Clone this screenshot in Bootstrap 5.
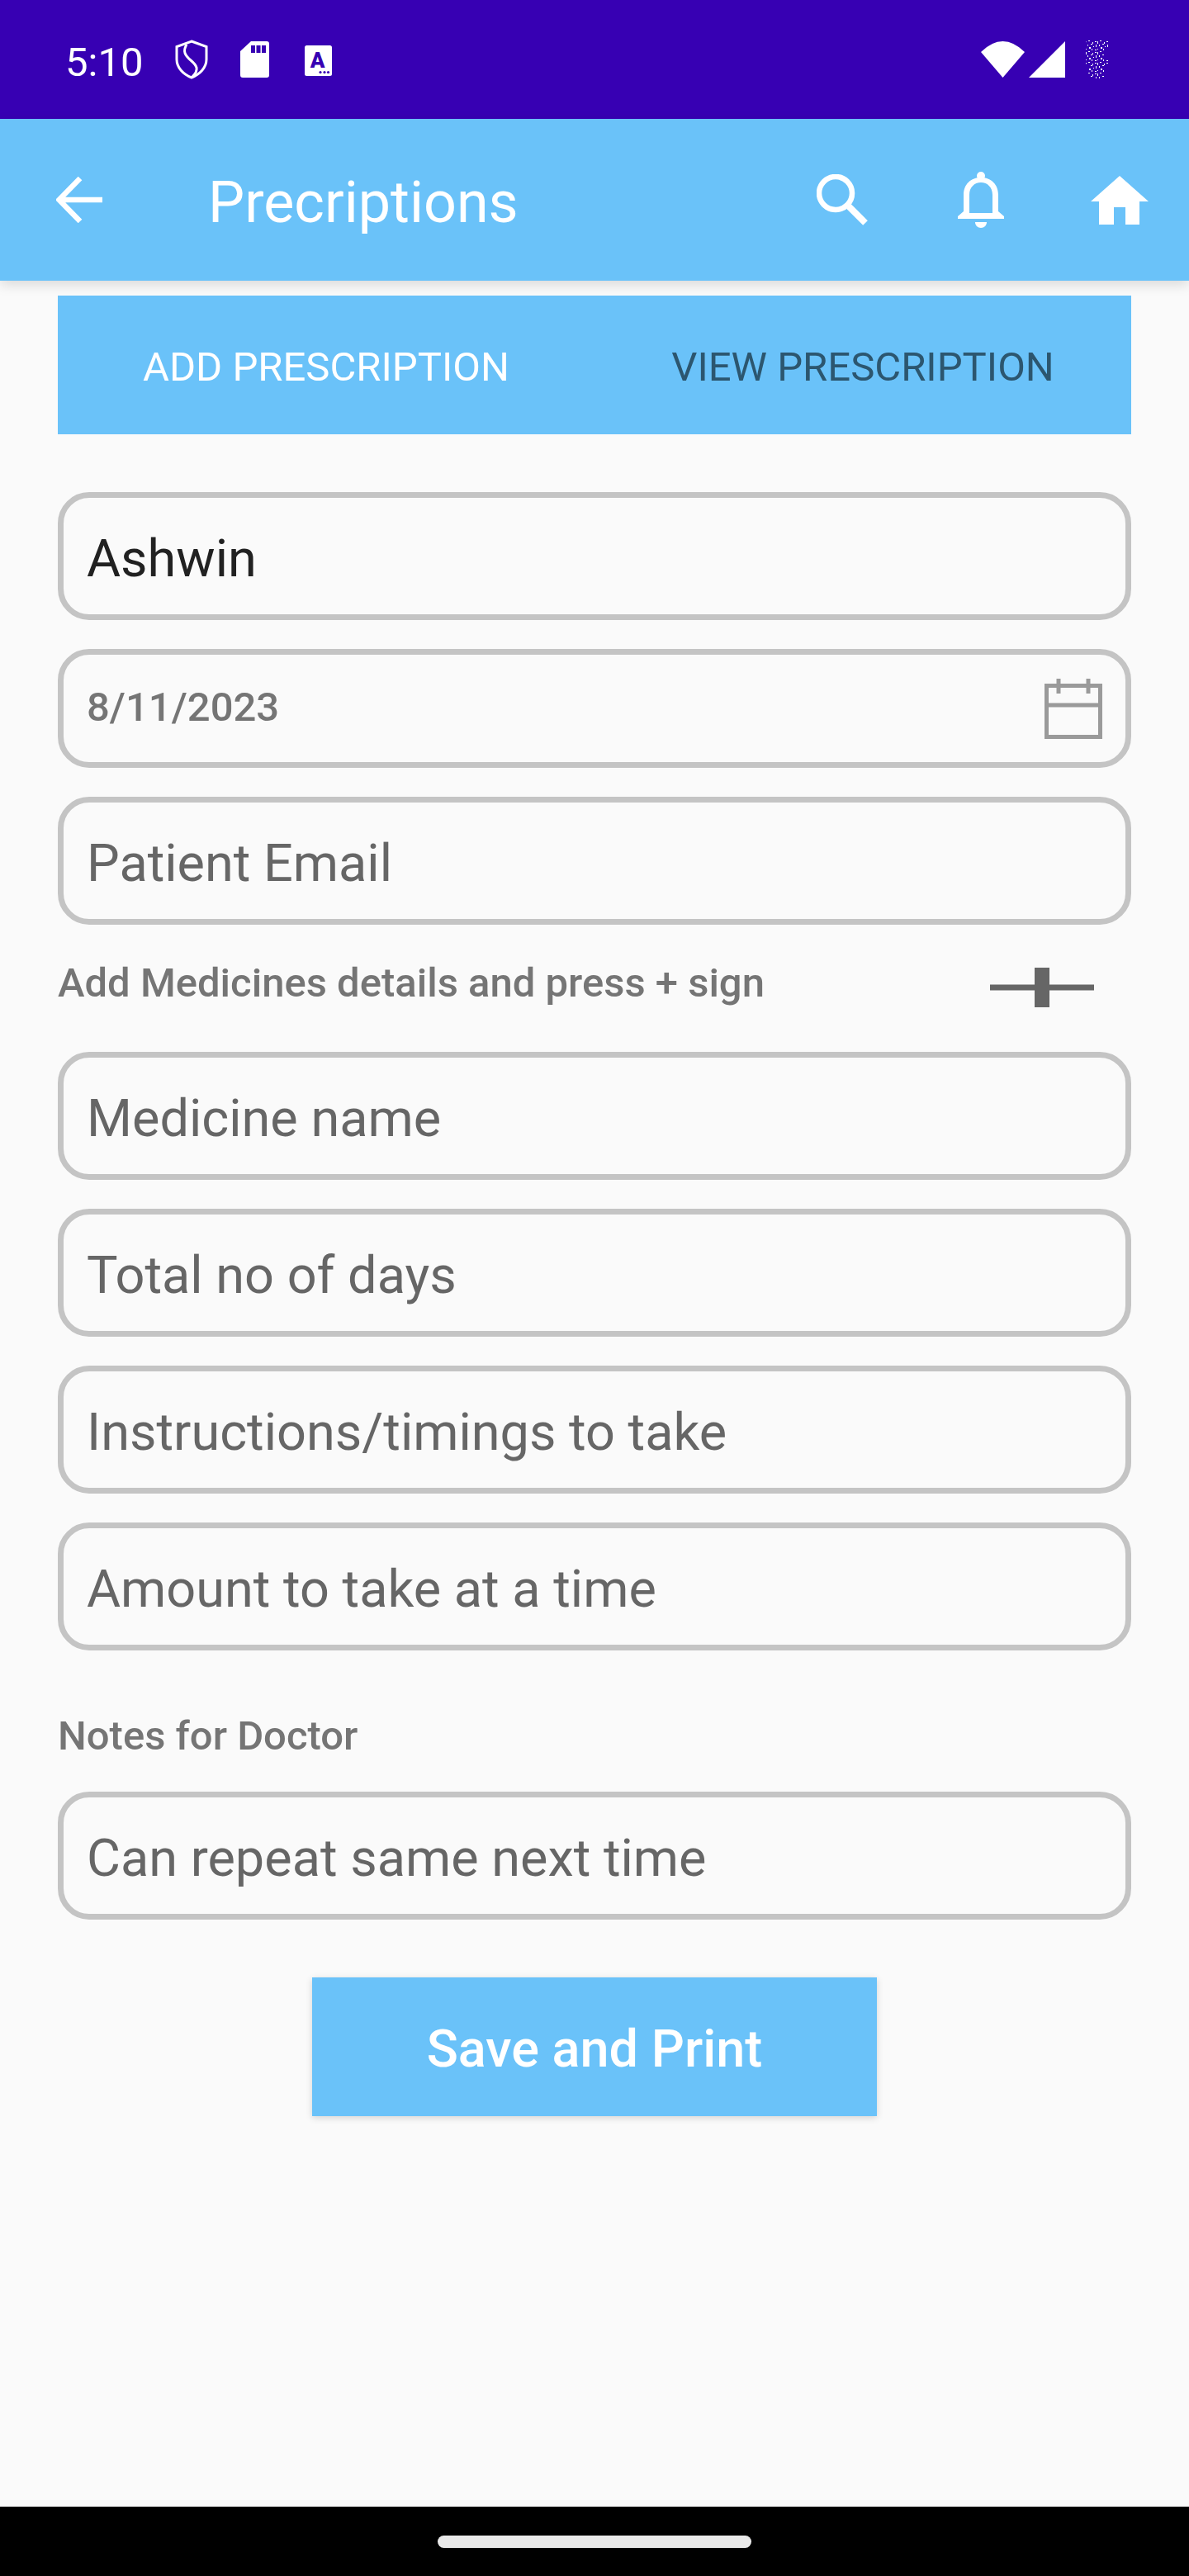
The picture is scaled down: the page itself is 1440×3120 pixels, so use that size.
<!DOCTYPE html>
<html lang="en">
<head>
  <meta charset="UTF-8" />
  <meta name="viewport" content="width=device-width, initial-scale=1" />
  <title>Precriptions</title>
  <link href="https://cdn.jsdelivr.net/npm/bootstrap@5.3.0/dist/css/bootstrap.min.css" rel="stylesheet" />
  <style>
    body { width: 1440px; height: 3120px; background: #fafafa; font-family: Roboto, "Liberation Sans", sans-serif; overflow: hidden; }
    svg { display: block; flex-shrink: 0; }

    .status-strip { height: 144px; background: #3700b3; color: #fff; padding-left: 79px; font-size: 49px; line-height: 1; }
    .status-time { width: 133px; padding-top: 6px; }
    .status-sd { margin-left: 39px; }
    .status-a { margin-left: 43px; margin-top: 2px; }
    .status-right { margin-left: auto; margin-right: 98px; }
    .status-bars { margin-left: 5px; }
    .status-noise { margin-left: 25px; }

    .app-strip { height: 196px; background: #6ac2f9; padding: 0; position: relative; z-index: 2; box-shadow: 0 5px 14px rgba(0, 0, 0, .13); flex-wrap: nowrap; }
    .back-btn { margin-left: 68px; }
    .app-title { margin-left: 128px; padding-top: 5px; color: #fff; font-size: 70px; line-height: 1; flex-grow: 1; }
    .action-btn { width: 168px; height: 100%; }

    .screen-body { padding: 18px 70px 0; }
    .rx-tabs { height: 168px; background: #6ac2f9; flex-wrap: nowrap; }
    .rx-tabs .nav-link { font-size: 49px; line-height: 1; color: #2c566f; padding: 4px 0 0; height: 100%; display: flex; align-items: center; justify-content: center; }
    .rx-tabs .nav-link.active { color: #fff; }

    .rx-form { padding-top: 70px; }
    .rx-field.form-control { height: 155px; margin-bottom: 35px; padding: 6px 28px 0; background: #fafafa; border: 7px solid #c4c4c4; border-radius: 38px; font-size: 63px; line-height: 1; color: #666; display: flex; align-items: center; }
    .rx-field.filled { color: #212121; }
    .rx-field.date-box { height: 144px; padding-top: 0; padding-right: 28px; font-size: 49px; font-weight: 500; color: #757575; justify-content: space-between; }
    .date-text { margin-bottom: 3px; }
    .rx-hint { font-size: 49px; line-height: 1; font-weight: 500; color: #757575; }
    .medicine-head { height: 119px; }
    .medicine-head .rx-hint { margin-top: 11px; }
    .notes-head { margin-top: 79px; margin-bottom: 43px; }
    .plus-btn { margin-right: 45px; margin-top: 17px; }

    .save-btn.btn { display: block; width: 684px; height: 168px; margin: 70px auto 0; padding: 5px 0 0; background: #6ac2f9; border: 0; border-radius: 0; color: #fff; font-size: 63px; font-weight: 500; line-height: 1; box-shadow: 0 2px 8px rgba(0, 0, 0, .16); }

    .nav-strip { height: 84px; background: #000; }
    .home-pill { width: 380px; height: 15px; background: #e9e9e9; border-radius: 8px; }
  </style>
</head>
<body class="d-flex flex-column">

  <div class="status-strip d-flex align-items-center">
    <span class="status-time">5:10</span>
    <svg width="40" height="48" viewBox="0 0 40 48" fill="none" stroke="#fff" stroke-width="3">
      <path d="M20 2 38 8.500V24C38 34 30 42 20 46 10 42 2 34 2 24V8.500Z"/>
      <path d="M14 6C9 14 12 19 19 25 26 31 30 36 21 45"/>
    </svg>
    <svg class="status-sd" width="35" height="44" viewBox="0 0 35 44" fill="#fff">
      <path fill-rule="evenodd" d="M13 0H32a3 3 0 0 1 3 3V41a3 3 0 0 1-3 3H3a3 3 0 0 1-3-3V12ZM13 5V14H18V5ZM19.500 5V14H24.500V5ZM26 5V14H31V5Z"/>
    </svg>
    <svg class="status-a" width="33" height="37" viewBox="0 0 33 37">
      <rect width="33" height="37" rx="2.500" fill="#fff"/>
      <text x="15.500" y="27" text-anchor="middle" font-family="Roboto, sans-serif" font-size="26" font-weight="900" fill="#3700b3">A</text>
      <circle cx="19" cy="32.500" r="1.600" fill="#3700b3"/><circle cx="24" cy="32.500" r="1.600" fill="#3700b3"/><circle cx="28.500" cy="32.500" r="1.600" fill="#3700b3"/>
    </svg>
    <div class="status-right d-flex align-items-center">
      <svg width="53" height="44" viewBox="0 0 53 44" fill="#fff">
        <path d="M26.500 44 0 13Q26.500-13 53 13Z"/>
      </svg>
      <svg class="status-bars" width="44" height="44" viewBox="0 0 44 44" fill="#fff">
        <path d="M44 0V44H0Z"/>
      </svg>
      <svg class="status-noise" width="27" height="46" viewBox="0 0 27 46">
        <defs>
          <pattern id="noiseTile" width="14" height="13" patternUnits="userSpaceOnUse">
            <rect x="0" y="1" width="1" height="3" fill="#fff"/><rect x="3" y="0" width="2" height="1" fill="#fff"/>
            <rect x="8" y="2" width="1" height="2" fill="#fff"/><rect x="11" y="1" width="2" height="1" fill="#fff"/>
            <rect x="2" y="5" width="1" height="2" fill="#fff"/><rect x="6" y="4" width="2" height="1" fill="#fff"/>
            <rect x="12" y="5" width="1" height="3" fill="#fff"/><rect x="9" y="7" width="1" height="1" fill="#fff"/>
            <rect x="4" y="8" width="2" height="2" fill="#fff"/><rect x="0" y="10" width="1" height="1" fill="#fff"/>
            <rect x="7" y="10" width="1" height="2" fill="#fff"/><rect x="11" y="11" width="2" height="1" fill="#fff"/>
          </pattern>
          <clipPath id="noiseShape"><path d="M0 0H27V10L22 12V22L27 24V30L22 32V46H3V30L0 28V10L3 8Z"/></clipPath>
        </defs>
        <rect width="27" height="46" fill="url(#noiseTile)" clip-path="url(#noiseShape)"/>
      </svg>
    </div>
  </div>

  <nav class="navbar app-strip align-items-center">
    <a class="back-btn" href="#" aria-label="Back">
      <svg width="56" height="56" viewBox="0 0 56 56" fill="none" stroke="#fff" stroke-width="6.500">
        <path d="M56 28H4M29 2 3.500 28 29 54"/>
      </svg>
    </a>
    <span class="app-title">Precriptions</span>
    <a class="action-btn d-flex align-items-center justify-content-center" href="#" aria-label="Search">
      <svg width="62" height="62" viewBox="0 0 62 62" fill="none" stroke="#fff" stroke-width="6.500">
        <circle cx="23" cy="23" r="20"/><path d="M39 39 59 59" stroke-width="8"/>
      </svg>
    </a>
    <a class="action-btn d-flex align-items-center justify-content-center" href="#" aria-label="Notifications">
      <svg width="56" height="68" viewBox="0 0 56 68" fill="#fff">
        <circle cx="28" cy="5" r="5"/>
        <path fill-rule="evenodd" d="M7 48V28C7 15 16 7 28 7S49 15 49 28V48L56 54V57H0V54ZM14 50H42V28C42 19 36 13 28 13S14 19 14 28Z"/>
        <path d="M21 61H35C35 65 32 68 28 68S21 65 21 61Z"/>
      </svg>
    </a>
    <a class="action-btn d-flex align-items-center justify-content-center" href="#" aria-label="Home">
      <svg width="70" height="59" viewBox="0 0 70 59" fill="#fff">
        <path d="M35 0 70 31H59V59H42V38H28V59H10V31H0Z"/>
      </svg>
    </a>
  </nav>

  <main class="screen-body flex-grow-1">
    <ul class="nav nav-justified rx-tabs">
      <li class="nav-item"><a class="nav-link active" href="#">ADD PRESCRIPTION</a></li>
      <li class="nav-item"><a class="nav-link" href="#">VIEW PRESCRIPTION</a></li>
    </ul>

    <form class="rx-form">
      <div class="form-control rx-field filled">Ashwin</div>
      <div class="form-control rx-field date-box">
        <span class="date-text">8/11/2023</span>
        <svg width="70" height="73" viewBox="0 0 70 73" fill="none" stroke="#9a9a9a" stroke-width="5">
          <path d="M2.500 8.500H67.500V70.500H2.500ZM2.500 32H67.500"/>
          <path d="M17 0V18M53 0V18"/>
        </svg>
      </div>
      <div class="form-control rx-field">Patient Email</div>

      <div class="medicine-head d-flex align-items-start justify-content-between">
        <span class="rx-hint">Add Medicines details and press + sign</span>
        <svg class="plus-btn" width="126" height="48" viewBox="0 0 126 48" fill="#666">
          <rect y="20.500" width="126" height="7"/><rect x="54" width="18" height="48"/>
        </svg>
      </div>

      <div class="form-control rx-field">Medicine name</div>
      <div class="form-control rx-field">Total no of days</div>
      <div class="form-control rx-field">Instructions/timings to take</div>
      <div class="form-control rx-field">Amount to take at a time</div>

      <div class="rx-hint notes-head">Notes for Doctor</div>
      <div class="form-control rx-field">Can repeat same next time</div>

      <button type="button" class="btn save-btn">Save and Print</button>
    </form>
  </main>

  <div class="nav-strip d-flex align-items-center justify-content-center">
    <div class="home-pill"></div>
  </div>

  <script src="https://cdn.jsdelivr.net/npm/bootstrap@5.3.0/dist/js/bootstrap.bundle.min.js"></script>
</body>
</html>
